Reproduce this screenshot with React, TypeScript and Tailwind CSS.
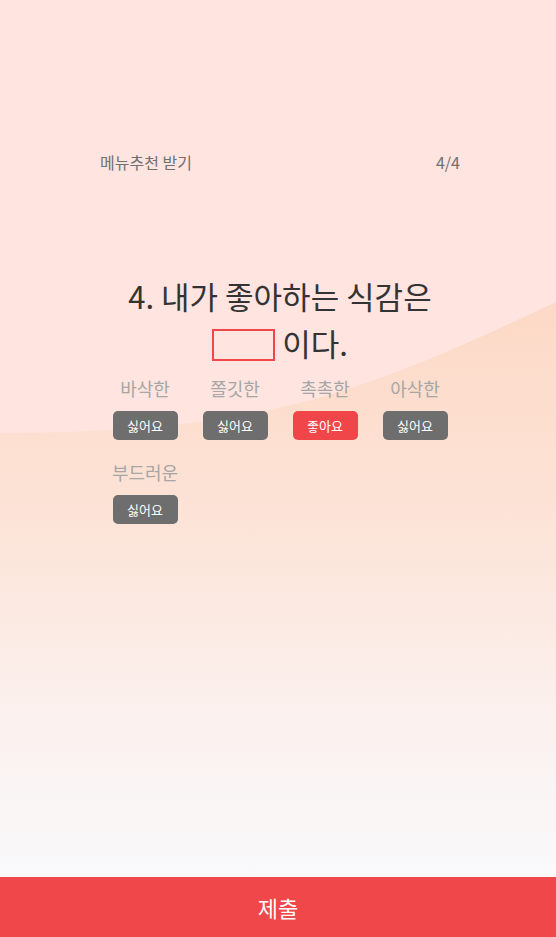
const options = [
  { label: '바삭한', liked: false },
  { label: '쫄깃한', liked: false },
  { label: '촉촉한', liked: true },
  { label: '아삭한', liked: false },
  { label: '부드러운', liked: false },
]

// background wave, purely decorative
const Wave = () => (
  <svg
    className="absolute inset-0 h-full w-full"
    viewBox="0 0 556 877"
    preserveAspectRatio="none"
    aria-hidden
  >
    <defs>
      <linearGradient id="wave" x1="0" y1="300" x2="0" y2="877" gradientUnits="userSpaceOnUse">
        <stop offset="0" stopColor="#fdd9c6" />
        <stop offset="0.4" stopColor="#fce4d8" />
        <stop offset="0.7" stopColor="#fbf0ed" />
        <stop offset="1" stopColor="#f9f9fb" />
      </linearGradient>
    </defs>
    <path d="M0 433 C 260 433, 360 395, 556 302 L556 877 L0 877 Z" fill="url(#wave)" />
  </svg>
)

const App = () => {
  return (
    <div
      className="flex min-h-screen flex-col bg-[#ffe4df]"
      style={{ fontFamily: '"Noto Sans CJK KR", "Noto Sans", sans-serif' }}
    >
      <div className="relative flex-1">
        <Wave />
        <div className="relative ml-[100px] flex w-[360px] flex-col items-center pt-[150px]">
          <div className="flex w-full items-center justify-between text-[16px] leading-[24px] text-[#707070]">
            <span>메뉴추천 받기</span>
            <span>4/4</span>
          </div>

          <h1 className="mt-[98px] text-center text-[31px] font-normal leading-[47px] text-[#333333]">
            4. 내가 좋아하는 식감은
            <br />
            <span className="inline-block h-[32px] w-[63px] border-2 border-[#f0474b] align-[-5px]" />{' '}
            이다.
          </h1>

          <div className="mt-[10px] grid w-full grid-cols-4 gap-y-[20px]">
            {options.map((option) => (
              <div key={option.label} className="flex flex-col items-center">
                <span className="text-[18px] leading-[24px] text-[#a6a6a6]">
                  {option.label}
                </span>
                <button
                  className={
                    option.liked
                      ? 'mt-[11px] h-[29px] w-[65px] rounded-[5px] bg-[#f0464a] text-[13px] text-white'
                      : 'mt-[11px] h-[29px] w-[65px] rounded-[5px] bg-[#6e6e6e] text-[13px] text-white'
                  }
                >
                  {option.liked ? '좋아요' : '싫어요'}
                </button>
              </div>
            ))}
          </div>
        </div>
      </div>

      <button className="h-[60px] w-full bg-[#f0474a] text-[22px] text-white">
        제출
      </button>
    </div>
  )
}

export default App
